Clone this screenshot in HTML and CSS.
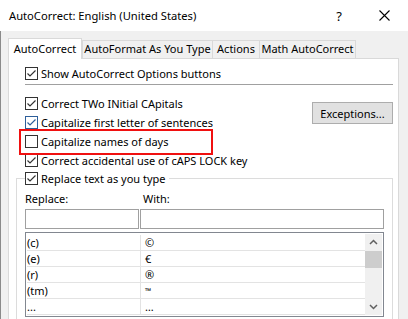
FILE: index.html
```html
<!DOCTYPE html>
<html lang="en">

<head>
    <meta charset="UTF-8">
    <title>AutoCorrect: English (United States)</title>
    <link rel="stylesheet" href="styles.css">
</head>

<body>
    <div class="window">
        <div class="titlebar">
            <span class="title">AutoCorrect: English (United States)</span>
            <span class="help">?</span>
            <svg class="close" width="11" height="11" viewBox="0 0 11 11">
                <path d="M0.5 0.5 L10.5 10.5 M10.5 0.5 L0.5 10.5" stroke="#000" stroke-width="1.1" fill="none" />
            </svg>
        </div>

        <div class="body">
            <div class="tabs">
                <div class="tab active">AutoCorrect</div>
                <div class="tab tab-format">AutoFormat As You Type</div>
                <div class="tab tab-actions">Actions</div>
                <div class="tab tab-math">Math AutoCorrect</div>
            </div>

            <div class="panel">
                <label class="check">
                    <svg class="box" width="13" height="13" viewBox="0 0 13 13"><rect x="0.5" y="0.5" width="12" height="12" fill="#fff" stroke="#333" /><path d="M2.5 6.5 L5 9 L10.5 3.5" stroke="#333" stroke-width="1.2" fill="none" /></svg>
                    Show AutoCorrect Options buttons
                </label>

                <div class="sep"></div>

                <div class="options">
                    <div class="option-list">
                        <label class="check">
                            <svg class="box" width="13" height="13" viewBox="0 0 13 13"><rect x="0.5" y="0.5" width="12" height="12" fill="#fff" stroke="#333" /><path d="M2.5 6.5 L5 9 L10.5 3.5" stroke="#333" stroke-width="1.2" fill="none" /></svg>
                            Correct TWo INitial CApitals
                        </label>
                        <label class="check">
                            <svg class="box" width="13" height="13" viewBox="0 0 13 13"><rect x="0.5" y="0.5" width="12" height="12" fill="#fff" stroke="#2d5f9a" /><path d="M2.5 6.5 L5 9 L10.5 3.5" stroke="#2d5f9a" stroke-width="1.2" fill="none" /></svg>
                            Capitalize first letter of sentences
                        </label>
                        <label class="check marked">
                            <svg class="box" width="13" height="13" viewBox="0 0 13 13"><rect x="0.5" y="0.5" width="12" height="12" fill="#fff" stroke="#333" /></svg>
                            Capitalize names of days
                        </label>
                        <label class="check">
                            <svg class="box" width="13" height="13" viewBox="0 0 13 13"><rect x="0.5" y="0.5" width="12" height="12" fill="#fff" stroke="#333" /><path d="M2.5 6.5 L5 9 L10.5 3.5" stroke="#333" stroke-width="1.2" fill="none" /></svg>
                            Correct accidental use of cAPS LOCK key
                        </label>
                    </div>
                    <button class="btn">Exceptions...</button>
                </div>

                <div class="group">
                    <label class="check group-head">
                        <svg class="box" width="13" height="13" viewBox="0 0 13 13"><rect x="0.5" y="0.5" width="12" height="12" fill="#fff" stroke="#333" /><path d="M2.5 6.5 L5 9 L10.5 3.5" stroke="#333" stroke-width="1.2" fill="none" /></svg>
                        Replace text as you type
                    </label>

                    <div class="labels">
                        <span class="lbl-replace">Replace:</span>
                        <span>With:</span>
                    </div>

                    <div class="inputs">
                        <input class="in-replace" type="text">
                        <input class="in-with" type="text">
                    </div>

                    <div class="list">
                        <div class="rows">
                            <div class="row"><span class="cell-a">(c)</span><span class="cell-b">©</span></div>
                            <div class="row"><span class="cell-a">(e)</span><span class="cell-b">€</span></div>
                            <div class="row"><span class="cell-a">(r)</span><span class="cell-b">®</span></div>
                            <div class="row"><span class="cell-a">(tm)</span><span class="cell-b tm">™</span></div>
                            <div class="row"><span class="cell-a">...</span><span class="cell-b">…</span></div>
                        </div>
                        <div class="scrollbar">
                            <div class="sb-btn">
                                <svg width="17" height="17" viewBox="0 0 17 17"><path d="M5 10 L8.5 6.5 L12 10" stroke="#606060" stroke-width="1.5" fill="none" /></svg>
                            </div>
                            <div class="sb-thumb"></div>
                            <div class="sb-track"></div>
                            <div class="sb-btn">
                                <svg width="17" height="17" viewBox="0 0 17 17"><path d="M5 7 L8.5 10.5 L12 7" stroke="#606060" stroke-width="1.5" fill="none" /></svg>
                            </div>
                        </div>
                    </div>
                </div>
            </div>
        </div>
    </div>
</body>

</html>
```

FILE: styles.css
```css
* {
    box-sizing: border-box;
}

body {
    margin: 0;
    padding: 0;
    font-family: 'Noto Sans', sans-serif;
    font-size: 11px;
    color: #000;
    background: #f0f0f0;
    overflow: hidden;
}

.window {
    width: 408px;
    height: 319px;
    display: flex;
    flex-direction: column;
}

.titlebar {
    height: 31px;
    flex: none;
    display: flex;
    align-items: center;
    padding: 0 18px 0 9px;
    background: #fff;
}

.title {
    font-size: 11.2px;
}

.help {
    margin-left: auto;
    margin-right: 37px;
    font-size: 13px;
}

.close {
    display: block;
}

.body {
    flex: 1;
    padding: 7px 0 0 7px;
    border-left: 1px solid #8a8a8a;
    background: #f0f0f0;
    overflow: hidden;
}

/* tabs */
.tabs {
    display: flex;
    align-items: flex-end;
    height: 20px;
}

.tab {
    height: 18px;
    line-height: 16px;
    border: 1px solid #d9d9d9;
    border-bottom: none;
    margin-left: -1px;
    background: #f0f0f0;
    text-align: center;
    white-space: nowrap;
}

.tab.active {
    position: relative;
    z-index: 1;
    width: 74px;
    height: 21px;
    line-height: 19px;
    margin-left: 0;
    margin-right: 1px;
    margin-bottom: -1px;
    background: #fff;
}

.tab-format {
    width: 131px;
}

.tab-actions {
    width: 48px;
}

.tab-math {
    width: 97px;
}

/* panel */
.panel {
    width: 391px;
    height: 300px;
    padding: 8px 5px 0 16px;
    border: 1px solid #d9d9d9;
    background: #fff;
}

.check {
    display: flex;
    align-items: center;
    gap: 3px;
    height: 13px;
    line-height: 13px;
    white-space: nowrap;
}

.box {
    display: block;
    flex: none;
}

.sep {
    margin: 4px 0 12px;
    border-top: 1px solid #a0a0a0;
}

.options {
    display: flex;
    justify-content: space-between;
    align-items: flex-start;
}

.option-list {
    display: flex;
    flex-direction: column;
    gap: 6px;
}

.marked {
    position: relative;
}

.marked::before {
    content: '';
    position: absolute;
    left: -6px;
    top: -6px;
    width: 190px;
    height: 22px;
    border: 2px solid #f01010;
}

.btn {
    margin-top: 5px;
    width: 81px;
    height: 22px;
    padding: 0;
    border: 1px solid #adadad;
    background: #e1e1e1;
    font-family: inherit;
    font-size: 11px;
    color: #000;
}

/* replace group */
.group {
    margin: 11px 0 0 -9px;
    height: 160px;
    padding: 0 7px 0 8px;
    border: 1px solid #dcdcdc;
}

.group-head {
    width: fit-content;
    margin-top: -7px;
    padding-right: 3px;
    background: #fff;
}

.labels {
    display: flex;
    margin-top: 6px;
    height: 15px;
    line-height: 15px;
}

.lbl-replace {
    width: 118px;
}

.inputs {
    display: flex;
    gap: 1px;
    margin-top: 3px;
}

.inputs input {
    height: 20px;
    margin: 0;
    border: 1px solid #a0a0a0;
    background: #fff;
}

.in-replace {
    width: 114px;
}

.in-with {
    width: 244px;
}

.list {
    display: flex;
    width: 359px;
    height: 85px;
    margin-top: 3px;
    padding: 1px;
    border: 1px solid #828790;
}

.rows {
    flex: 1;
    padding-top: 1px;
}

.row {
    display: grid;
    grid-template-columns: 114px 1fr;
    height: 16px;
    line-height: 15px;
    border-bottom: 1px solid #e3e3e3;
}

.cell-a {
    border-right: 1px solid #e3e3e3;
}

.cell-b {
    padding-left: 4px;
}

.tm {
    font-size: 8px;
}

.scrollbar {
    width: 17px;
    display: flex;
    flex-direction: column;
    background: #f0f0f0;
}

.sb-btn {
    height: 17px;
}

.sb-btn svg {
    display: block;
}

.sb-thumb {
    height: 17px;
    background: #cdcdcd;
}

.sb-track {
    flex: 1;
}
```
